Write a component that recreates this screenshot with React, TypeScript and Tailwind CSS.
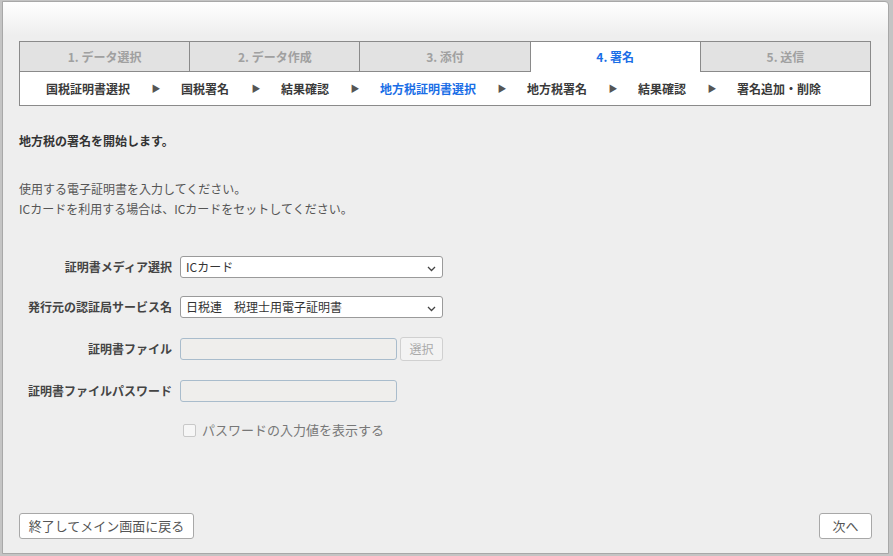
import { Fragment } from "react";

const steps = ["1. データ選択", "2. データ作成", "3. 添付", "4. 署名", "5. 送信"];

const subSteps = [
  { label: "国税証明書選択", w: "w-[85px]" },
  { label: "国税署名", w: "w-[50px]" },
  { label: "結果確認", w: "w-[49px]" },
  { label: "地方税証明書選択", w: "w-[97px]", active: true },
  { label: "地方税署名", w: "w-[61px]" },
  { label: "結果確認", w: "w-[49px]" },
  { label: "署名追加・削除", w: "w-[86px]" }
];

function Chevron() {
  return (
    <svg width="9" height="6" viewBox="0 0 9 6" className="absolute right-[6px] top-[9px]">
      <path d="M1 1 L4.5 4.5 L8 1" fill="none" stroke="#444" strokeWidth="1.3" />
    </svg>
  );
}

function Row({ label, children }: { label: string, children: any }) {
  return (
    <div className="flex items-center h-[22px]">
      <div className="w-[161px] text-right font-bold text-[#444] pr-[8px] whitespace-nowrap">{label}</div>
      {children}
    </div>
  );
}

export default function App() {
  return (
    <div
      className="w-[893px] h-[556px] bg-[#c4c4c4] overflow-hidden text-[12px] leading-[18px]"
      style={{ fontFamily: '"Noto Sans CJK JP", "Noto Sans", sans-serif' }}
    >
      <div className="ml-[2px] mt-[1px] w-[887px] h-[553px] border border-[#a8a8a8] rounded-tr-[4px] bg-[linear-gradient(to_bottom,#ffffff_0px,#eeeeee_34px,#eeeeee_100%)] flex flex-col px-[16px] pt-[39px] pb-[14px]">
        {/* step tabs */}
        <div className="w-[852px] border border-[#8a8a8a] bg-white">
          <div className="flex h-[30px]">
            {steps.map((step, i) => {
              const active = i === 3;
              return (
                <div
                  key={step}
                  className={
                    "flex-1 flex items-center justify-center font-bold " +
                    (i > 0 ? "border-l border-[#8a8a8a] " : "") +
                    (active ? "bg-white text-[#1a6ee6]" : "bg-[#e2e2e2] text-[#a0a0a0] border-b border-b-[#8a8a8a]")
                  }
                >
                  {step}
                </div>
              );
            })}
          </div>
          <div className="flex items-center h-[33px] pl-[26px]">
            {subSteps.map((s, i) => (
              <Fragment key={i}>
                <div className={"whitespace-nowrap font-bold " + s.w + " " + (s.active ? "text-[#1a6ee6]" : "text-[#3a3a3a]")}>{s.label}</div>
                {i < subSteps.length - 1 && (
                  <div className="w-[50px] flex justify-center text-[9px] text-[#555]">▶</div>
                )}
              </Fragment>
            ))}
          </div>
        </div>

        <div className="mt-[26px] font-bold text-[#333]">地方税の署名を開始します。</div>

        <div className="mt-[29px] text-[#555] leading-[20px]">
          <div>使用する電子証明書を入力してください。</div>
          <div>ICカードを利用する場合は、ICカードをセットしてください。</div>
        </div>

        <div className="mt-[37px] flex flex-col gap-[19px]">
          <Row label="証明書メディア選択">
            <div className="relative w-[263px] h-[22px] bg-white border border-[#9a9a9a] rounded-[3px] pl-[5px] flex items-center text-[#333]">
              ICカード
              <Chevron />
            </div>
          </Row>
          <div className="mt-[-1px]">
            <Row label="発行元の認証局サービス名">
              <div className="relative w-[263px] h-[22px] bg-white border border-[#9a9a9a] rounded-[3px] pl-[5px] flex items-center text-[#333]">
                日税連　税理士用電子証明書
                <Chevron />
              </div>
            </Row>
          </div>
          <div className="mt-[1px]">
            <Row label="証明書ファイル">
              <div className="w-[217px] h-[22px] bg-[#efeeec] border border-[#a9bccc] rounded-[3px]" />
              <div className="ml-[3px] w-[43px] h-[24px] bg-[#f3f3f3] border border-[#d0d0d0] rounded-[3px] flex items-center justify-center text-[#aaa]">選択</div>
            </Row>
          </div>
          <div className="mt-[1px]">
            <Row label="証明書ファイルパスワード">
              <div className="w-[217px] h-[22px] bg-[#efeeec] border border-[#a9bccc] rounded-[3px]" />
            </Row>
          </div>
          <div className="flex items-center h-[22px] mt-[-2px] pl-[164px]">
            <div className="w-[13px] h-[13px] border border-[#c8c8c8] rounded-[2px] bg-[#f6f6f6]" />
            <div className="ml-[6px] text-[#777] text-[13px]">パスワードの入力値を表示する</div>
          </div>
        </div>

        <div className="mt-auto flex justify-between">
          <div className="w-[175px] h-[26px] bg-white border border-[#a8a8a8] rounded-[3px] flex items-center justify-center text-[#555] text-[13px]">終了してメイン画面に戻る</div>
          <div className="w-[53px] h-[26px] bg-white border border-[#a8a8a8] rounded-[3px] flex items-center justify-center text-[#555] text-[13px]">次へ</div>
        </div>
      </div>
    </div>
  );
}
